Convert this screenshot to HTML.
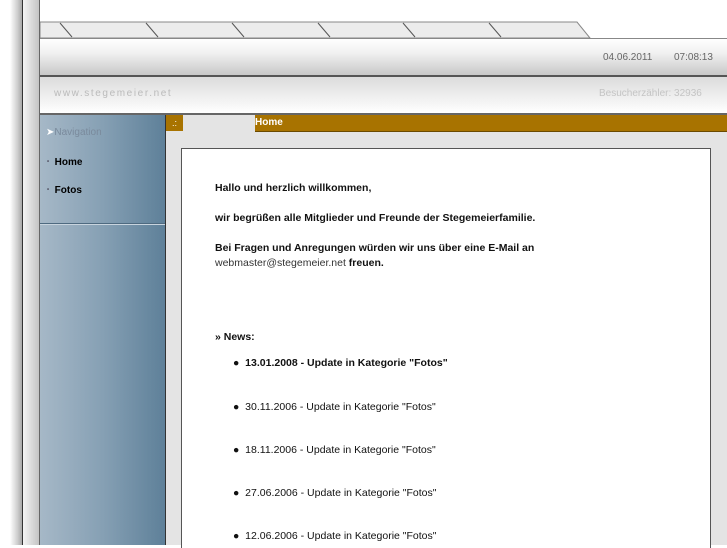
<!DOCTYPE html>
<html><head><meta charset="utf-8"><style>
*{margin:0;padding:0;box-sizing:border-box}
body{width:727px;height:545px;overflow:hidden;background:#fff;position:relative;font-family:"Liberation Sans",Arial,sans-serif}
.a{position:absolute}
</style></head><body>
<div class="a" style="left:10px;top:0;width:12px;height:545px;background:linear-gradient(90deg,#fff,#d0d0d0 60%,#a8a8a8)"></div>
<div class="a" style="left:22px;top:0;width:1px;height:545px;background:#333"></div>
<div class="a" style="left:23px;top:0;width:16px;height:545px;background:linear-gradient(90deg,#f4f4f4,#dcdcdc 50%,#c4c4c4)"></div>
<div class="a" style="left:39px;top:0;width:1px;height:545px;background:#666"></div>
<svg class="a" style="left:40px;top:20px" width="560" height="20">
<polygon points="0,2 537,2 550,18 0,18" fill="#ececec" stroke="#888" stroke-width="1"/>
<g stroke="#555" stroke-width="1">
<line x1="20" y1="3" x2="32" y2="17"/><line x1="106" y1="3" x2="118" y2="17"/><line x1="192" y1="3" x2="204" y2="17"/><line x1="278" y1="3" x2="290" y2="17"/><line x1="363" y1="3" x2="375" y2="17"/><line x1="449" y1="3" x2="461" y2="17"/></g>
<line x1="0" y1="18.5" x2="553" y2="18.5" stroke="#777"/>
</svg>
<div class="a" style="left:40px;top:38px;width:687px;height:37px;background:linear-gradient(#fff,#f0f0f0 40%,#c8c8c8);border-top:1px solid #888"></div>
<div class="a" style="left:603px;top:52px;font-size:10px;color:#666">04.06.2011</div>
<div class="a" style="left:674px;top:52px;font-size:10px;color:#666">07:08:13</div>
<div class="a" style="left:40px;top:75px;width:687px;height:2px;background:#555"></div>
<div class="a" style="left:40px;top:77px;width:687px;height:36px;background:linear-gradient(#dcdcdc,#f4f4f4 70%,#fff)"></div>
<div class="a" style="left:54px;top:88px;font-size:10px;color:#bbb;letter-spacing:1.6px">www.stegemeier.net</div>
<div class="a" style="left:599px;top:88px;font-size:10px;color:#c4c4c4">Besucherzähler: 32936</div>
<div class="a" style="left:40px;top:113px;width:687px;height:2px;background:#666"></div>
<div class="a" style="left:40px;top:115px;width:125px;height:430px;background:linear-gradient(90deg,#a6b8c7,#86a0b4 50%,#5e8099)"></div>
<div class="a" style="left:165px;top:115px;width:1px;height:430px;background:#333"></div>
<div class="a" style="left:40px;top:223px;width:125px;height:1px;background:#4e6a80"></div>
<div class="a" style="left:40px;top:224px;width:125px;height:1px;background:#c8d4de"></div>
<div class="a" style="left:46px;top:127px;font-size:10px;color:#7a8a9c"><span style="color:#fff">&#10148;</span>Navigation</div>
<div class="a" style="left:47px;top:157px;font-size:10px;font-weight:bold;color:#000"><span style="color:#556;font-size:6px;vertical-align:2px">•</span>&nbsp; Home</div>
<div class="a" style="left:47px;top:185px;font-size:10px;font-weight:bold;color:#000"><span style="color:#556;font-size:6px;vertical-align:2px">•</span>&nbsp; Fotos</div>
<div class="a" style="left:166px;top:115px;width:561px;height:430px;background:#e4e4e4"></div>
<div class="a" style="left:166px;top:115px;width:17px;height:16px;background:#a87300;color:#fff;font-size:9px;padding-left:6px;line-height:16px">.:</div>
<div class="a" style="left:255px;top:115px;width:472px;height:17px;background:#a87300;color:#fff;font-size:10px;font-weight:bold;line-height:15px;border-bottom:1px solid #6b4a00">Home</div>
<div class="a" style="left:181px;top:148px;width:530px;height:400px;background:#fff;border:1px solid #555;border-bottom:none"></div>
<div class="a" style="left:215px;top:181px;font-size:10.5px;font-weight:bold;color:#111;line-height:15px;width:490px">
<div>Hallo und herzlich willkommen,</div>
<div style="margin-top:15px">wir begrüßen alle Mitglieder und Freunde der Stegemeierfamilie.</div>
<div style="margin-top:15px">Bei Fragen und Anregungen würden wir uns über eine E-Mail an<br><span style="color:#333;font-weight:normal">webmaster@stegemeier.net</span> freuen.</div>
<div style="margin-top:59px">» News:</div>
</div>
<div class="a" style="left:233px;top:356px;font-size:10.5px;color:#111;line-height:15px">
<div style="position:absolute;top:0;white-space:nowrap;font-weight:bold">●&nbsp;&nbsp;13.01.2008 - Update in Kategorie "Fotos"</div>
<div style="position:absolute;top:44px;white-space:nowrap">●&nbsp;&nbsp;30.11.2006 - Update in Kategorie "Fotos"</div>
<div style="position:absolute;top:87px;white-space:nowrap">●&nbsp;&nbsp;18.11.2006 - Update in Kategorie "Fotos"</div>
<div style="position:absolute;top:130px;white-space:nowrap">●&nbsp;&nbsp;27.06.2006 - Update in Kategorie "Fotos"</div>
<div style="position:absolute;top:173px;white-space:nowrap">●&nbsp;&nbsp;12.06.2006 - Update in Kategorie "Fotos"</div>
</div>
</body></html>
